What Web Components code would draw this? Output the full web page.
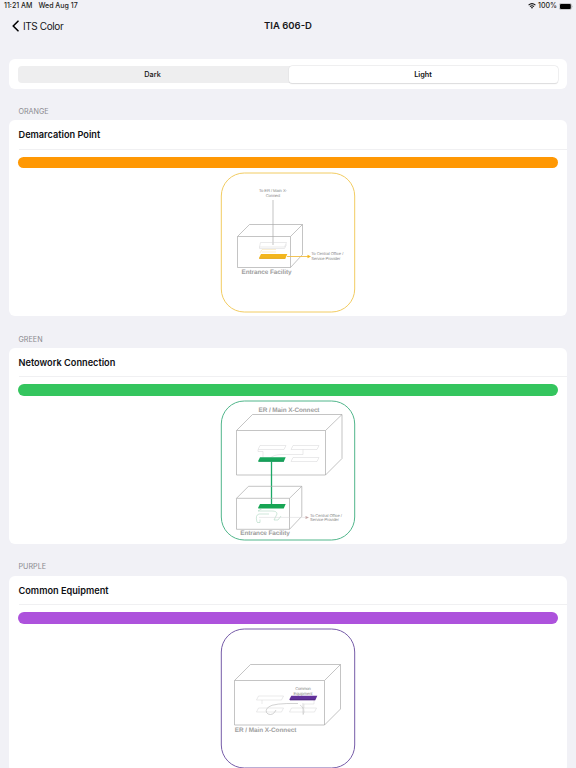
<!DOCTYPE html>
<html lang="en">
<head>
<meta charset="utf-8">
<title>TIA 606-D</title>
<style>
    html, body {
        margin: 0;
        height: 100%;
        overflow: hidden;
        background: #f1f1f6;
    }
</style>
</head>
<body>
<color-app></color-app>

<script>
class StatusBar extends HTMLElement {

    constructor() {
        super();
        this.shadowDOM = this.attachShadow({mode: "open"});
    }

    connectedCallback() {
        this.render();
    }

    render() {
        this.shadowDOM.innerHTML = `
        <style>
            :host {
                display: flex;
                align-items: center;
                height: 12px;
                padding: 0 3px 0 4px;
                font-size: 7px;
                font-weight: 500;
                line-height: 12px;
                color: #1c1c20;
            }
            .date {
                margin-left: 6px;
                flex: 1;
            }
            .wifi {
                width: 8px;
                height: 6px;
                margin-right: 2px;
            }
            .battery {
                width: 14px;
                height: 7px;
                margin-left: 2px;
            }
        </style>
        <span>11:21 AM</span>
        <span class="date">Wed Aug 17</span>
        <svg class="wifi" viewBox="0 0 8 6">
            <path d="M.6 2.2Q4-.9 7.4 2.2M2 3.7Q4 1.9 6 3.7" fill="none" stroke="#111" stroke-width="1.1"/>
            <path d="M2.9 4.5Q4 3.7 5.1 4.5L4 5.8Z" fill="#111"/>
        </svg>
        <span>100%</span>
        <svg class="battery" viewBox="0 0 14 7">
            <rect x=".3" y=".4" width="12.2" height="6.2" rx="1.7" fill="none" stroke="#999" stroke-width=".5"/>
            <rect x="1" y="1.1" width="10.8" height="4.8" rx="1" fill="#000"/>
            <path d="M13.1 2.5q.8 1 0 2z" fill="#888"/>
        </svg>
        `;
    }
}

class NavBar extends HTMLElement {

    constructor() {
        super();
        this.shadowDOM = this.attachShadow({mode: "open"});
    }

    connectedCallback() {
        this.render();
    }

    render() {
        this.shadowDOM.innerHTML = `
        <style>
            :host {
                display: grid;
                grid-template-columns: 1fr auto 1fr;
                align-items: center;
                height: 28px;
                padding: 0 12px;
                line-height: 14px;
                color: #16161a;
            }
            .back {
                display: flex;
                align-items: center;
                gap: 4px;
                font-size: 10px;
                letter-spacing: -.4px;
            }
            svg {
                width: 7px;
                height: 12px;
            }
            .title {
                font-size: 9.5px;
                font-weight: 600;
            }
        </style>
        <div class="back">
            <svg viewBox="0 0 7 12"><path d="M6 1.2 1.2 6 6 10.8" fill="none" stroke="#000" stroke-width="1.6" stroke-linecap="round" stroke-linejoin="round"/></svg>
            <slot name="back"></slot>
        </div>
        <div class="title"><slot></slot></div>
        `;
    }
}

class ThemePicker extends HTMLElement {

    constructor() {
        super();
        this.shadowDOM = this.attachShadow({mode: "open"});
    }

    connectedCallback() {
        this.render();
    }

    render() {
        this.shadowDOM.innerHTML = `
        <style>
            :host {
                display: block;
                box-sizing: border-box;
                height: 29.5px;
                margin: 19px 9px 0;
                padding: 6.5px 9px 5.5px;
                border-radius: 6px;
                background: #fff;
            }
            .track {
                display: flex;
                gap: 1px;
                height: 17.5px;
                border-radius: 4px;
                background: #eeeeef;
            }
            .track > div {
                flex: 1;
                text-align: center;
                font-size: 7.3px;
                font-weight: 500;
                line-height: 18px;
                color: #111;
            }
            .track > .selected {
                margin: .5px;
                border-radius: 3.5px;
                background: #fff;
                box-shadow: 0 0 0 .5px #e4e4e6, 0 .5px 1px rgba(0, 0, 0, .16);
                font-weight: 600;
                line-height: 17px;
            }
        </style>
        <div class="track">
            <div>Dark</div>
            <div class="selected">Light</div>
        </div>
        `;
    }
}

class ColorSection extends HTMLElement {

    constructor() {
        super();
        this.shadowDOM = this.attachShadow({mode: "open"});
    }

    connectedCallback() {
        this.render();
    }

    render() {
        this.shadowDOM.innerHTML = `
        <style>
            :host {
                display: block;
                margin: 0 9px;
            }
            .header {
                box-sizing: border-box;
                height: 31.7px;
                padding: 18.4px 9.5px 0;
                font-size: 7.2px;
                line-height: 10px;
                color: #8b8b90;
            }
            .card {
                height: 196px;
                border-radius: 6px;
                background: #fff;
            }
            .name {
                box-sizing: border-box;
                height: 29.5px;
                margin-left: 9.5px;
                border-bottom: 1px solid #f0f0f2;
                font-size: 9.2px;
                font-weight: 600;
                line-height: 29px;
                color: #101014;
            }
            .bar {
                height: 11.5px;
                margin: 7px 9.3px 0;
                border-radius: 6px;
                background: var(--bar);
            }
            .diagram {
                display: flex;
                justify-content: center;
            }
        </style>
        <div class="header"><slot name="header"></slot></div>
        <div class="card">
            <div class="name"><slot></slot></div>
            <div class="bar"></div>
            <div class="diagram"><slot name="diagram"></slot></div>
        </div>
        `;
    }
}

// line drawings, all on the same 144 x 148 canvas
const diagrams = {
    demarcation: `
        <path class="box" d="M21.5 68.5h53v31h-53zM21.5 68.5 33.5 56.5h53v30L74.5 99.5M74.5 68.5l12-12"/>
        <path class="box" d="M57 32V77"/>
        <path class="faint" d="M43.5 79l1-4.5h26l-2 4.5zM43.5 79v1.5h25l2-4"/>
        <path class="faint warm" d="M44 85l2-3.5h14M46 84h14"/>
        <path d="M43 90 45 86H71.3L69.3 90.8H43.5Z" fill="#f3b61d"/>
        <path d="M43.2 90.4h26" stroke="#d99a08" stroke-width=".6"/>
        <path d="M71 88.5H92" stroke="#f0bd45" stroke-width=".9"/>
        <path d="M91.5 86.7 95 88.5 91.5 90.3z" fill="#f3b61d"/>
        <text class="note" x="57" y="24" text-anchor="middle" textLength="28">To ER / Main X-</text>
        <text class="note" x="57" y="29" text-anchor="middle" textLength="14.5">Connect</text>
        <text class="note" x="95.3" y="87.3" textLength="32">To Central Office /</text>
        <text class="note" x="95.3" y="92" textLength="29">Service Provider</text>
        <text class="label" x="25.5" y="106" textLength="50">Entrance Facility</text>`,
    network: `
        <path class="box" d="M20.5 34.5h89v44.5h-89zM20.5 34.5 36.5 18.5h89.5v44L109.5 79M109.5 34.5l16.5-16"/>
        <path class="faint" d="M42 53.5l2-4h26l-2 4zM75 53.5l2-4h26l-2 4zM75 65.5l2-4h26l-2 4zM42 54v1.5h5v6M87 53.5v5H66q-9 0-12 4"/>
        <path d="M42 65.2 44 61.2H69.7L67.7 65.7H42.5Z" fill="#18a75c"/>
        <path d="M43 65.2h25" stroke="#0b854b" stroke-width=".6"/>
        <path d="M55.5 65V109" stroke="#1ca866" stroke-width="1.3"/>
        <path class="box" d="M20.5 102.3h53v31h-53zM20.5 102.3l12-12h53.3v30L73.5 133.3M73.5 102.3l12.3-12"/>
        <path d="M42 112 44 108H69.7L67.7 112.4H42.5Z" fill="#17a554"/>
        <path class="faint green" d="M46 112.5l-4 2.5h14q5 0 5 3l-3 6h4l3-4M41 126q-2-7 2-8h10M41 126.5h3v-3"/>
        <path class="faint" d="M43 121.4h46"/>
        <path d="M89.5 120 93 121.5 89.5 123z" fill="#c5a8a8"/>
        <text class="label" x="42.5" y="16.3" textLength="61">ER / Main X-Connect</text>
        <text class="note" x="94" y="120.8" textLength="32">To Central Office /</text>
        <text class="note" x="94" y="125.4" textLength="29">Service Provider</text>
        <text class="label" x="24.3" y="139" textLength="49.5">Entrance Facility</text>`,
    equipment: `
        <path class="box" d="M18.5 56.5h90v44.5h-90zM18.5 56.5 34.5 40.5h90v44.5L108.5 101M108.5 56.5l16-16"/>
        <path class="faint" d="M40.5 76l2-4h25l-2 4zM40.5 88l2-4h25l-2 4zM73.5 88l2-4h25l-2 4zM46 76v4M98 76v4H88v4"/>
        <path d="M82 79.5Q57 79 52.5 83T52 90Q57 92 60 86" fill="none" stroke="#b4b4b4" stroke-width=".6"/>
        <path d="M87 79v11M84 81q6 4 3 10" fill="none" stroke="#bbb" stroke-width=".5"/>
        <text class="note" x="87" y="66.2" text-anchor="middle" textLength="15.5">Common</text>
        <text class="note" x="87" y="71.1" text-anchor="middle" textLength="19">Equipment</text>
        <path d="M73.3 75.5 75.3 71.8H101.3L99.3 76.2H74Z" fill="#62319b"/>
        <path d="M74 75.7h25" stroke="#452170" stroke-width=".6"/>
        <text class="label" x="18.8" y="108" textLength="61.5">ER / Main X-Connect</text>`
};

class WiringDiagram extends HTMLElement {

    constructor() {
        super();
        this.shadowDOM = this.attachShadow({mode: "open"});
    }

    connectedCallback() {
        this.render();
    }

    render() {
        this.shadowDOM.innerHTML = `
        <style>
            :host {
                display: block;
                width: 144px;
                height: 148px;
            }
            svg {
                display: block;
            }
            .frame {
                fill: none;
                stroke: var(--frame);
                stroke-width: 1;
            }
            .box {
                fill: none;
                stroke: #aaa;
                stroke-width: .7;
            }
            .faint {
                fill: none;
                stroke: #d4d4d6;
                stroke-width: .5;
            }
            .warm {
                stroke: #f4dda2;
            }
            .green {
                stroke: #9fceb4;
            }
            text {
                font-family: "Liberation Sans", Arial, sans-serif;
                text-rendering: geometricPrecision;
            }
            .label {
                font-size: 6.4px;
                font-weight: bold;
                fill: #a0a0a0;
            }
            .note {
                font-size: 4.2px;
                fill: #888;
            }
        </style>
        <svg width="144" height="148" viewBox="0 0 144 148">
            <rect class="frame" x="5.3" y="5" width="133.4" height="139" rx="23"/>
            ${diagrams[this.getAttribute("kind")]}
        </svg>
        `;
    }
}

class ColorApp extends HTMLElement {

    constructor() {
        super();
        this.shadowDOM = this.attachShadow({mode: "open"});
    }

    connectedCallback() {
        this.render();
    }

    render() {
        this.shadowDOM.innerHTML = `
        <style>
            :host {
                display: block;
                height: 768px;
                overflow: hidden;
                background: #f1f1f6;
                font-family: Inter, "Liberation Sans", sans-serif;
            }
            .orange {
                --bar: #ff9803;
                --frame: #f2cc62;
            }
            .green {
                --bar: #34c55e;
                --frame: #51b68b;
            }
            .purple {
                --bar: #ad52dc;
                --frame: #765ca8;
            }
        </style>
        <status-bar></status-bar>
        <nav-bar><span slot="back">ITS Color</span>TIA 606-D</nav-bar>
        <theme-picker></theme-picker>
        <color-section class="orange">
            <span slot="header">ORANGE</span>Demarcation Point
            <wiring-diagram slot="diagram" kind="demarcation"></wiring-diagram>
        </color-section>
        <color-section class="green">
            <span slot="header">GREEN</span>Netowork Connection
            <wiring-diagram slot="diagram" kind="network"></wiring-diagram>
        </color-section>
        <color-section class="purple">
            <span slot="header">PURPLE</span>Common Equipment
            <wiring-diagram slot="diagram" kind="equipment"></wiring-diagram>
        </color-section>
        `;
    }
}

customElements.define("status-bar", StatusBar);
customElements.define("nav-bar", NavBar);
customElements.define("theme-picker", ThemePicker);
customElements.define("color-section", ColorSection);
customElements.define("wiring-diagram", WiringDiagram);
customElements.define("color-app", ColorApp);
</script>
</body>
</html>
